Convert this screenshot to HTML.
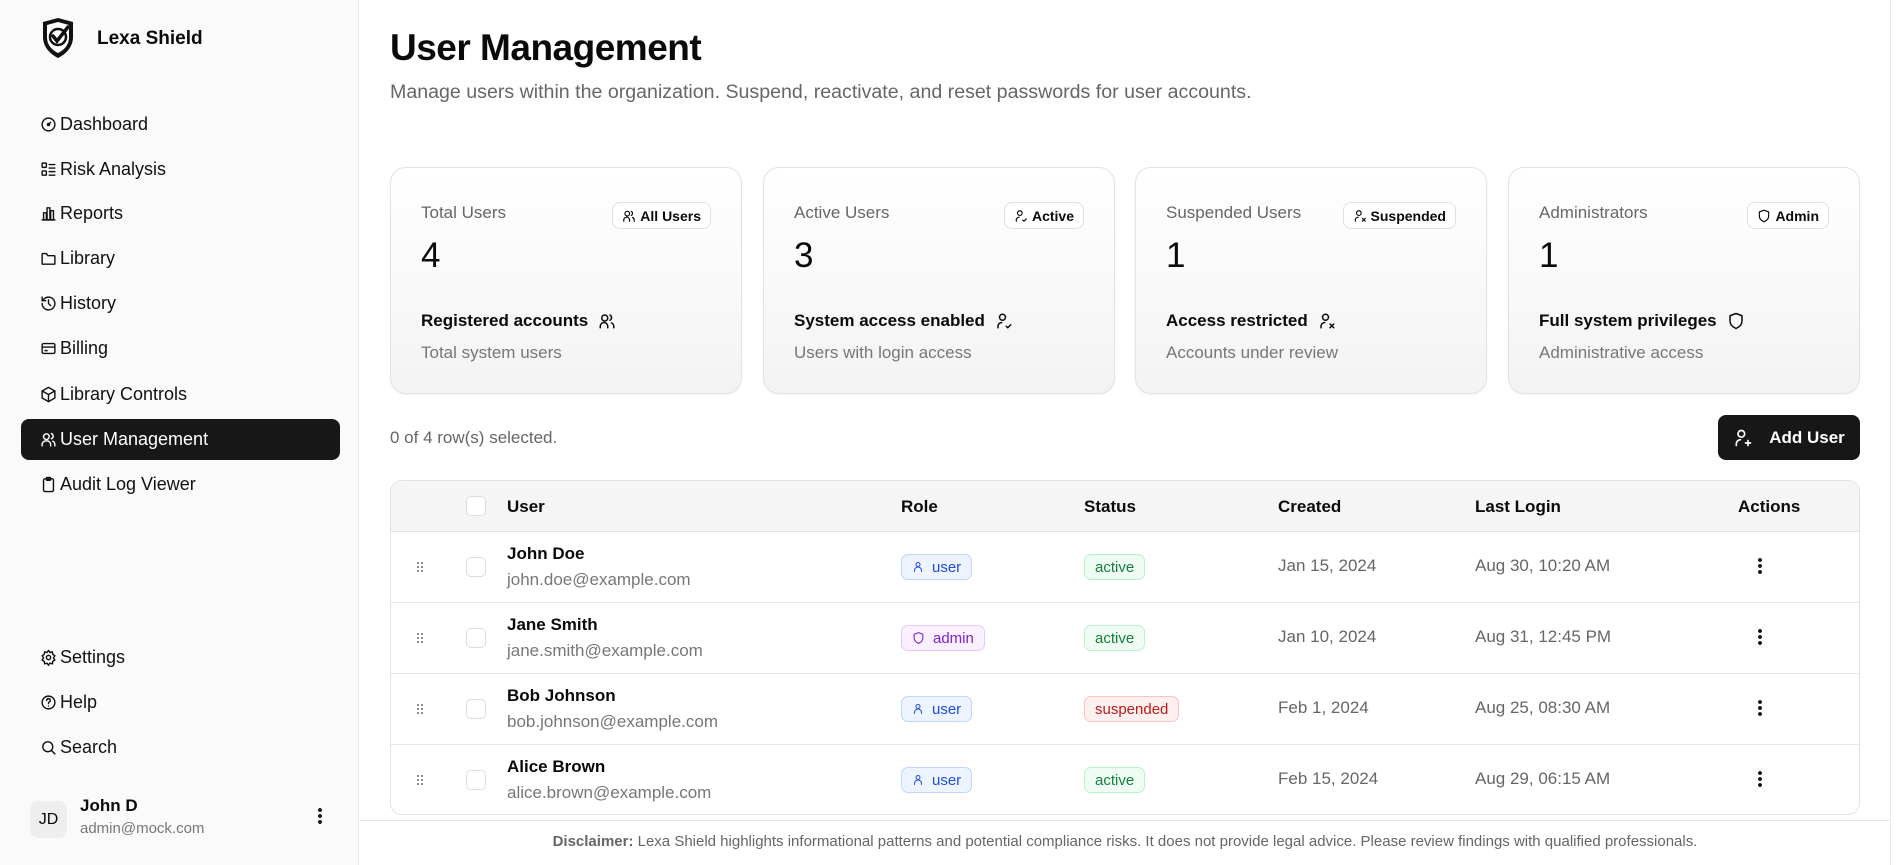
<!DOCTYPE html>
<html><head><meta charset="utf-8"><style>
*{box-sizing:border-box;margin:0;padding:0}
body{width:1902px;height:865px;overflow:hidden;font-family:"Liberation Sans",sans-serif;background:#fff;color:#0a0a0a;position:relative}
.side{position:absolute;left:0;top:0;width:359px;height:865px;background:#fafafa;border-right:1px solid #e8e8e8}
.logo{position:absolute;left:40px;top:17px}
.brand{position:absolute;left:97px;top:28px;font-size:19px;font-weight:bold}
.nav{position:absolute;left:21px;width:319px;height:41px;border-radius:8px;display:flex;align-items:center;padding-left:19px;font-size:18px;color:#111}
.nav svg{width:17px;height:17px;margin-right:3px;fill:none;stroke:currentColor;stroke-width:2;stroke-linecap:round;stroke-linejoin:round}
.nav.act{background:#171717;color:#fff}
h1{position:absolute;left:390px;top:27px;font-size:37px;font-weight:bold;letter-spacing:-0.5px}
.sub{position:absolute;left:390px;top:81px;font-size:19.6px;color:#666}
.card{position:absolute;top:167px;width:352px;height:227px;border:1px solid #e3e3e3;border-radius:16px;background:linear-gradient(#fff,#f3f3f3);box-shadow:0 1px 2px rgba(0,0,0,.05)}
.card .lbl{position:absolute;left:30px;top:35px;font-size:17px;color:#666}
.card .num{position:absolute;left:30px;top:68px;font-size:35px}
.card .bd{position:absolute;right:30px;top:34px;height:27px;border:1px solid #e0e0e0;border-radius:8px;background:#fff;font-size:14px;font-weight:bold;display:flex;align-items:center;padding:0 9px;gap:4px}
.card .t{position:absolute;left:30px;top:143px;font-size:17px;font-weight:bold;display:flex;align-items:center;gap:10px}
.card .d{position:absolute;left:30px;top:175px;font-size:17px;color:#777}
svg.i{fill:none;stroke:currentColor;stroke-width:2;stroke-linecap:round;stroke-linejoin:round}
.sel{position:absolute;left:390px;top:428px;font-size:17px;color:#666}
.btn{position:absolute;left:1718px;top:415px;width:142px;height:45px;background:#171717;color:#fff;border-radius:8px;display:flex;align-items:center;justify-content:center;gap:16px;font-size:17px;font-weight:bold}
.tbl{position:absolute;left:390px;top:480px;width:1470px;height:335px;border:1px solid #e3e3e3;border-radius:12px;overflow:hidden}
.hd{position:absolute;left:0;top:0;width:100%;height:51px;background:#f5f5f5;border-bottom:1px solid #e3e3e3}
.c{position:absolute;font-size:17px}
.hd .c{top:16px;font-weight:bold}
.row{position:absolute;left:0;width:100%;height:71px;border-bottom:1px solid #e6e6e6}
.row:last-child{border-bottom:none}
.cb{position:absolute;left:75px;width:20px;height:20px;border:1px solid #ddd;border-radius:5px;background:#fff}
.drag{position:absolute;left:25px;top:29px;width:8px;height:12px;background-image:radial-gradient(circle,#888 1px,transparent 1.3px);background-size:4px 4px}
.nm{position:absolute;left:116px;top:12px;font-size:17px;font-weight:bold}
.em{position:absolute;left:116px;top:38px;font-size:17px;color:#777}
.pill{position:absolute;top:22px;height:26px;border-radius:7px;font-size:15px;display:flex;align-items:center;padding:0 10px;gap:8px}
.u{left:510px;background:#eef4ff;border:1px solid #bfd6fe;color:#1d4ed8}
.a{left:510px;background:#faf0ff;border:1px solid #e9c8fb;color:#7e22ce}
.ok{left:693px;background:#effcf3;border:1px solid #bbf0cc;color:#15803d}
.sp{left:693px;background:#fff0f0;border:1px solid #fbc4c4;color:#b91c1c}
.dt{position:absolute;top:24px;font-size:17px;color:#666}
.dots{position:absolute;left:1367px;top:25px;width:4px;height:18px;background-image:radial-gradient(circle,#111 1.8px,transparent 2px);background-size:4px 6px}
.foot{position:absolute;left:360px;top:820px;width:1530px;height:45px;border-top:1px solid #e8e8e8;text-align:center;font-size:15px;color:#666;padding-top:12px}
</style></head><body>
<div class="side">
<svg class="logo" width="36" height="42" viewBox="0 0 36 42"><path d="M3 5 L18 1 L33 5 L33 20 C33 30 26 37 18 41 C10 37 3 30 3 20Z" fill="#111"/><path d="M7 8 L18 5 L29 8 L29 20 C29 28 24 33 18 36 C12 33 7 28 7 20Z" fill="#fff"/><circle cx="18" cy="20" r="8" fill="none" stroke="#111" stroke-width="2.5"/><path d="M13 19 L17 24 L28 10" fill="none" stroke="#111" stroke-width="3.5" stroke-linecap="round"/></svg>
<div class="brand">Lexa Shield</div>
<div class="nav" style="top:104px"><svg viewBox="0 0 24 24"><circle cx="12" cy="12" r="9"/><path d="M12 12l3-3"/><circle cx="12" cy="12" r="1.5"/></svg>Dashboard</div>
<div class="nav" style="top:149px"><svg viewBox="0 0 24 24"><rect x="3" y="3" width="6" height="6" rx="1"/><rect x="3" y="14" width="6" height="6" rx="1"/><path d="M13 5h8M13 10h8M13 15h8M13 20h8"/></svg>Risk Analysis</div>
<div class="nav" style="top:193px"><svg viewBox="0 0 24 24"><path d="M3 21h18"/><rect x="5" y="11" width="4" height="10"/><rect x="10" y="4" width="4" height="17"/><rect x="15" y="8" width="4" height="13"/></svg>Reports</div>
<div class="nav" style="top:238px"><svg viewBox="0 0 24 24"><path d="M3 6a1 1 0 0 1 1-1h5l2 3h9a1 1 0 0 1 1 1v10a1 1 0 0 1-1 1H4a1 1 0 0 1-1-1z"/></svg>Library</div>
<div class="nav" style="top:283px"><svg viewBox="0 0 24 24"><path d="M3 12a9 9 0 1 0 3-6.7L3 8"/><path d="M3 3v5h5"/><path d="M12 7v5l3 3"/></svg>History</div>
<div class="nav" style="top:328px"><svg viewBox="0 0 24 24"><rect x="3" y="5" width="18" height="14" rx="2"/><path d="M3 10h18M7 15h3"/></svg>Billing</div>
<div class="nav" style="top:374px"><svg viewBox="0 0 24 24"><path d="M12 2l9 5v10l-9 5-9-5V7z"/><path d="M3 7l9 5 9-5M12 12v10"/></svg>Library Controls</div>
<div class="nav act" style="top:419px"><svg viewBox="0 0 24 24"><circle cx="9" cy="8" r="4"/><path d="M3 21v-2a5 5 0 0 1 5-5h2a5 5 0 0 1 5 5v2"/><path d="M16 3.5a4 4 0 0 1 0 7.5M21 21v-2a5 5 0 0 0-3-4.5"/></svg>User Management</div>
<div class="nav" style="top:464px"><svg viewBox="0 0 24 24"><rect x="5" y="4" width="14" height="18" rx="2"/><rect x="9" y="2" width="6" height="4" rx="1"/></svg>Audit Log Viewer</div>
<div class="nav" style="top:637px"><svg viewBox="0 0 24 24"><circle cx="12" cy="12" r="3"/><path d="M12 2l2 3 3.5-1 .5 3.5 3 2-2 3 2 3-3 2-.5 3.5-3.5-1-2 3-2-3-3.5 1L6 17.5l-3-2 2-3-2-3 3-2L6.5 4l3.5 1z"/></svg>Settings</div>
<div class="nav" style="top:682px"><svg viewBox="0 0 24 24"><circle cx="12" cy="12" r="9"/><path d="M9.5 9a2.5 2.5 0 1 1 3.5 2.3c-.6.3-1 .9-1 1.7v.5M12 17h.01"/></svg>Help</div>
<div class="nav" style="top:727px"><svg viewBox="0 0 24 24"><circle cx="11" cy="11" r="7"/><path d="M21 21l-5-5"/></svg>Search</div>
<div style="position:absolute;left:30px;top:801px;width:37px;height:37px;border-radius:8px;background:#eee;font-size:16px;display:flex;align-items:center;justify-content:center">JD</div>
<div style="position:absolute;left:80px;top:796px;font-size:17px;font-weight:bold">John D</div>
<div style="position:absolute;left:80px;top:820px;font-size:15px;color:#777">admin@mock.com</div>
<div style="position:absolute;left:318px;top:807px;width:4px;height:18px;background-image:radial-gradient(circle,#111 1.8px,transparent 2px);background-size:4px 6px"></div>
</div>

<h1>User Management</h1>
<div class="sub">Manage users within the organization. Suspend, reactivate, and reset passwords for user accounts.</div>

<div class="card" style="left:390px"><div class="lbl">Total Users</div><div class="bd"><svg class="i" width="14" height="14" viewBox="0 0 24 24"><circle cx="9" cy="8" r="4"/><path d="M3 21v-2a5 5 0 0 1 10 0v2M16 4a4 4 0 0 1 0 7M21 21v-2a5 5 0 0 0-3-4.5"/></svg>All Users</div><div class="num">4</div><div class="t">Registered accounts <svg class="i" width="18" height="18" viewBox="0 0 24 24"><circle cx="9" cy="8" r="4"/><path d="M3 21v-2a5 5 0 0 1 10 0v2M16 4a4 4 0 0 1 0 7M21 21v-2a5 5 0 0 0-3-4.5"/></svg></div><div class="d">Total system users</div></div>
<div class="card" style="left:763px"><div class="lbl">Active Users</div><div class="bd"><svg class="i" width="14" height="14" viewBox="0 0 24 24"><circle cx="10" cy="7" r="4"/><path d="M4 21v-2a5 5 0 0 1 5-5M15 19l2 2 4-4"/></svg>Active</div><div class="num">3</div><div class="t">System access enabled <svg class="i" width="18" height="18" viewBox="0 0 24 24"><circle cx="10" cy="7" r="4"/><path d="M4 21v-2a5 5 0 0 1 5-5M15 19l2 2 4-4"/></svg></div><div class="d">Users with login access</div></div>
<div class="card" style="left:1135px"><div class="lbl">Suspended Users</div><div class="bd"><svg class="i" width="14" height="14" viewBox="0 0 24 24"><circle cx="10" cy="7" r="4"/><path d="M4 21v-2a5 5 0 0 1 5-5M16 16l5 5M21 16l-5 5"/></svg>Suspended</div><div class="num">1</div><div class="t">Access restricted <svg class="i" width="18" height="18" viewBox="0 0 24 24"><circle cx="10" cy="7" r="4"/><path d="M4 21v-2a5 5 0 0 1 5-5M16 16l5 5M21 16l-5 5"/></svg></div><div class="d">Accounts under review</div></div>
<div class="card" style="left:1508px"><div class="lbl">Administrators</div><div class="bd"><svg class="i" width="14" height="14" viewBox="0 0 24 24"><path d="M12 2l8 3v7c0 5-3.5 8-8 10-4.5-2-8-5-8-10V5z"/></svg>Admin</div><div class="num">1</div><div class="t">Full system privileges <svg class="i" width="18" height="18" viewBox="0 0 24 24"><path d="M12 2l8 3v7c0 5-3.5 8-8 10-4.5-2-8-5-8-10V5z"/></svg></div><div class="d">Administrative access</div></div>

<div class="sel">0 of 4 row(s) selected.</div>
<div class="btn"><svg class="i" width="20" height="20" viewBox="0 0 24 24"><circle cx="10" cy="7" r="4"/><path d="M4 21v-2a5 5 0 0 1 5-5M18 15v6M15 18h6"/></svg>Add User</div>

<div class="tbl">
<div class="hd"><div class="cb" style="top:15px"></div><div class="c" style="left:116px">User</div><div class="c" style="left:510px">Role</div><div class="c" style="left:693px">Status</div><div class="c" style="left:887px">Created</div><div class="c" style="left:1084px">Last Login</div><div class="c" style="left:1347px">Actions</div></div>
<div class="row" style="top:51px"><div class="drag"></div><div class="cb" style="top:25px"></div><div class="nm">John Doe</div><div class="em">john.doe@example.com</div><div class="pill u"><svg class="i" width="12" height="14" viewBox="0 0 24 24"><circle cx="12" cy="7" r="4"/><path d="M5 21v-2a6 6 0 0 1 14 0v2"/></svg>user</div><div class="pill ok">active</div><div class="dt" style="left:887px">Jan 15, 2024</div><div class="dt" style="left:1084px">Aug 30, 10:20 AM</div><div class="dots"></div></div>
<div class="row" style="top:122px"><div class="drag"></div><div class="cb" style="top:25px"></div><div class="nm">Jane Smith</div><div class="em">jane.smith@example.com</div><div class="pill a"><svg class="i" width="13" height="14" viewBox="0 0 24 24"><path d="M12 2l8 3v7c0 5-3.5 8-8 10-4.5-2-8-5-8-10V5z"/></svg>admin</div><div class="pill ok">active</div><div class="dt" style="left:887px">Jan 10, 2024</div><div class="dt" style="left:1084px">Aug 31, 12:45 PM</div><div class="dots"></div></div>
<div class="row" style="top:193px"><div class="drag"></div><div class="cb" style="top:25px"></div><div class="nm">Bob Johnson</div><div class="em">bob.johnson@example.com</div><div class="pill u"><svg class="i" width="12" height="14" viewBox="0 0 24 24"><circle cx="12" cy="7" r="4"/><path d="M5 21v-2a6 6 0 0 1 14 0v2"/></svg>user</div><div class="pill sp">suspended</div><div class="dt" style="left:887px">Feb 1, 2024</div><div class="dt" style="left:1084px">Aug 25, 08:30 AM</div><div class="dots"></div></div>
<div class="row" style="top:264px"><div class="drag"></div><div class="cb" style="top:25px"></div><div class="nm">Alice Brown</div><div class="em">alice.brown@example.com</div><div class="pill u"><svg class="i" width="12" height="14" viewBox="0 0 24 24"><circle cx="12" cy="7" r="4"/><path d="M5 21v-2a6 6 0 0 1 14 0v2"/></svg>user</div><div class="pill ok">active</div><div class="dt" style="left:887px">Feb 15, 2024</div><div class="dt" style="left:1084px">Aug 29, 06:15 AM</div><div class="dots"></div></div>
</div>

<div class="foot"><b>Disclaimer:</b> Lexa Shield highlights informational patterns and potential compliance risks. It does not provide legal advice. Please review findings with qualified professionals.</div>
<div style="position:absolute;left:1890px;top:0;width:1px;height:865px;background:#e8e8e8"></div>
</body></html>
